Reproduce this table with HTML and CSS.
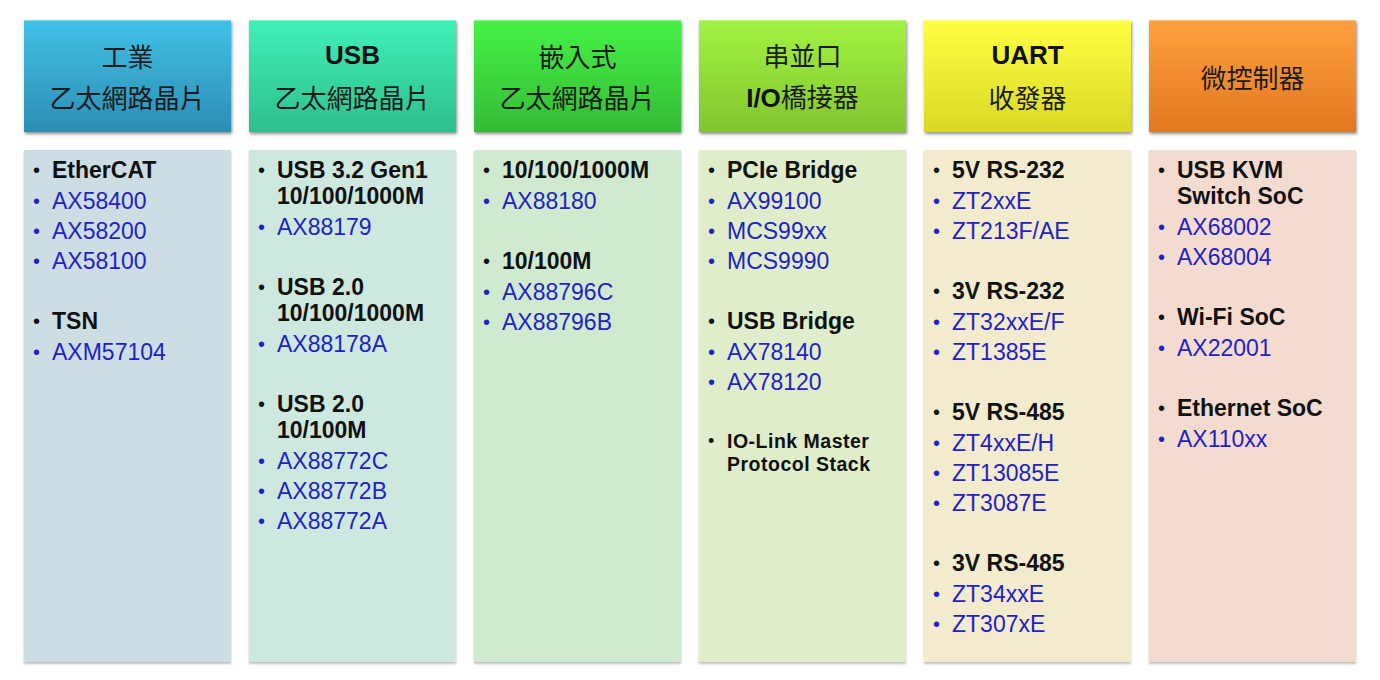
FILE: index.html
```html
<!DOCTYPE html>
<html lang="zh-Hant">
<head>
<meta charset="utf-8">
<title>產品線</title>
<link rel="stylesheet" href="styles.css">
</head>
<body>
<div class="board">
  <section class="col c1">
    <header class="head"><div class="hl">工業</div><div class="hl">乙太網路晶片</div></header>
    <div class="body">
      <ul class="grp">
        <li class="h">EtherCAT</li>
        <li>AX58400</li><li>AX58200</li><li>AX58100</li>
      </ul>
      <ul class="grp">
        <li class="h">TSN</li>
        <li>AXM57104</li>
      </ul>
    </div>
  </section>
  <section class="col c2">
    <header class="head"><div class="hl en">USB</div><div class="hl">乙太網路晶片</div></header>
    <div class="body">
      <ul class="grp">
        <li class="h">USB 3.2 Gen1 10/100/1000M</li>
        <li>AX88179</li>
      </ul>
      <ul class="grp">
        <li class="h">USB 2.0 10/100/1000M</li>
        <li>AX88178A</li>
      </ul>
      <ul class="grp">
        <li class="h">USB 2.0 10/100M</li>
        <li>AX88772C</li><li>AX88772B</li><li>AX88772A</li>
      </ul>
    </div>
  </section>
  <section class="col c3">
    <header class="head"><div class="hl">嵌入式</div><div class="hl">乙太網路晶片</div></header>
    <div class="body">
      <ul class="grp">
        <li class="h">10/100/1000M</li>
        <li>AX88180</li>
      </ul>
      <ul class="grp">
        <li class="h">10/100M</li>
        <li>AX88796C</li><li>AX88796B</li>
      </ul>
    </div>
  </section>
  <section class="col c4">
    <header class="head"><div class="hl">串並口</div><div class="hl"><span class="en">I/O</span>橋接器</div></header>
    <div class="body">
      <ul class="grp">
        <li class="h">PCIe Bridge</li>
        <li>AX99100</li><li>MCS99xx</li><li>MCS9990</li>
      </ul>
      <ul class="grp">
        <li class="h">USB Bridge</li>
        <li>AX78140</li><li>AX78120</li>
      </ul>
      <ul class="grp">
        <li class="h sm">IO-Link Master Protocol Stack</li>
      </ul>
    </div>
  </section>
  <section class="col c5">
    <header class="head"><div class="hl en">UART</div><div class="hl">收發器</div></header>
    <div class="body">
      <ul class="grp">
        <li class="h">5V RS-232</li>
        <li>ZT2xxE</li><li>ZT213F/AE</li>
      </ul>
      <ul class="grp">
        <li class="h">3V RS-232</li>
        <li>ZT32xxE/F</li><li>ZT1385E</li>
      </ul>
      <ul class="grp">
        <li class="h">5V RS-485</li>
        <li>ZT4xxE/H</li><li>ZT13085E</li><li>ZT3087E</li>
      </ul>
      <ul class="grp">
        <li class="h">3V RS-485</li>
        <li>ZT34xxE</li><li>ZT307xE</li>
      </ul>
    </div>
  </section>
  <section class="col c6">
    <header class="head"><div class="hl">微控制器</div></header>
    <div class="body">
      <ul class="grp">
        <li class="h">USB KVM Switch SoC</li>
        <li>AX68002</li><li>AX68004</li>
      </ul>
      <ul class="grp">
        <li class="h">Wi-Fi SoC</li>
        <li>AX22001</li>
      </ul>
      <ul class="grp">
        <li class="h">Ethernet SoC</li>
        <li>AX110xx</li>
      </ul>
    </div>
  </section>
</div>
</body>
</html>
```

FILE: styles.css
```css
html, body {
  margin: 0;
  padding: 0;
  background: #ffffff;
}
body {
  width: 1380px;
  height: 680px;
  overflow: hidden;
  font-family: "Liberation Sans", Arial, "Noto Sans CJK TC", sans-serif;
}
.board {
  display: grid;
  grid-template-columns: repeat(6, 207px);
  column-gap: 18px;
  padding: 20px 0 0 24px;
}
.col {
  display: flex;
  flex-direction: column;
  gap: 18px;
}
.head {
  height: 112px;
  display: flex;
  flex-direction: column;
  justify-content: center;
  align-items: center;
  box-shadow: 1px 2px 3px rgba(0, 0, 0, 0.45), inset 0 1px 0 rgba(255, 255, 255, 0.35);
  color: #1b1b1b;
}
.hl {
  font-family: "Noto Sans CJK TC", sans-serif;
  font-size: 26px;
  line-height: 41px;
  font-weight: 400;
  white-space: nowrap;
}
.en {
  font-family: "Liberation Sans", Arial, sans-serif;
  font-weight: 700;
  font-size: 26px;
  color: #111;
}
.c1 .head { background: linear-gradient(#41c1e6, #2d8db5); }
.c2 .head { background: linear-gradient(#3ff0b9, #2fbf8c); }
.c3 .head { background: linear-gradient(#47f247, #33bb35); }
.c4 .head { background: linear-gradient(#a2f341, #82c52e); }
.c5 .head { background: linear-gradient(#ffff42, #d9d925); }
.c6 .head { background: linear-gradient(#ffa03f, #e27820); }

.body {
  height: 512px;
  box-sizing: border-box;
  padding: 5px 8px 0 9px;
  box-shadow: 0 2px 2px rgba(0, 0, 0, 0.25);
}
.c1 .body { background: #cddde4; }
.c2 .body { background: #cde8de; }
.c3 .body { background: #cfeacf; }
.c4 .body { background: #dfedcb; }
.c5 .body { background: #f2ebcd; }
.c6 .body { background: #f3dbd0; }

.grp {
  list-style: none;
  margin: 0 0 30px 0;
  padding: 0;
}
.grp li {
  display: flex;
  font-size: 23px;
  line-height: 30px;
  color: #2222c4;
}
.grp li::before {
  content: "\2022";
  width: 19px;
  flex: none;
  font-size: 20px;
  color: #2222c4;
}
.grp li.h {
  font-weight: 700;
  color: #111;
  line-height: 26px;
  padding: 2px 0 3px 0;
}
.grp li.h::before {
  color: #111;
  font-weight: 400;
}
.grp li.sm {
  font-size: 19.5px;
  line-height: 23px;
  letter-spacing: 0.5px;
  padding-top: 3px;
}
.grp li.sm::before {
  font-size: 18px;
}
```
